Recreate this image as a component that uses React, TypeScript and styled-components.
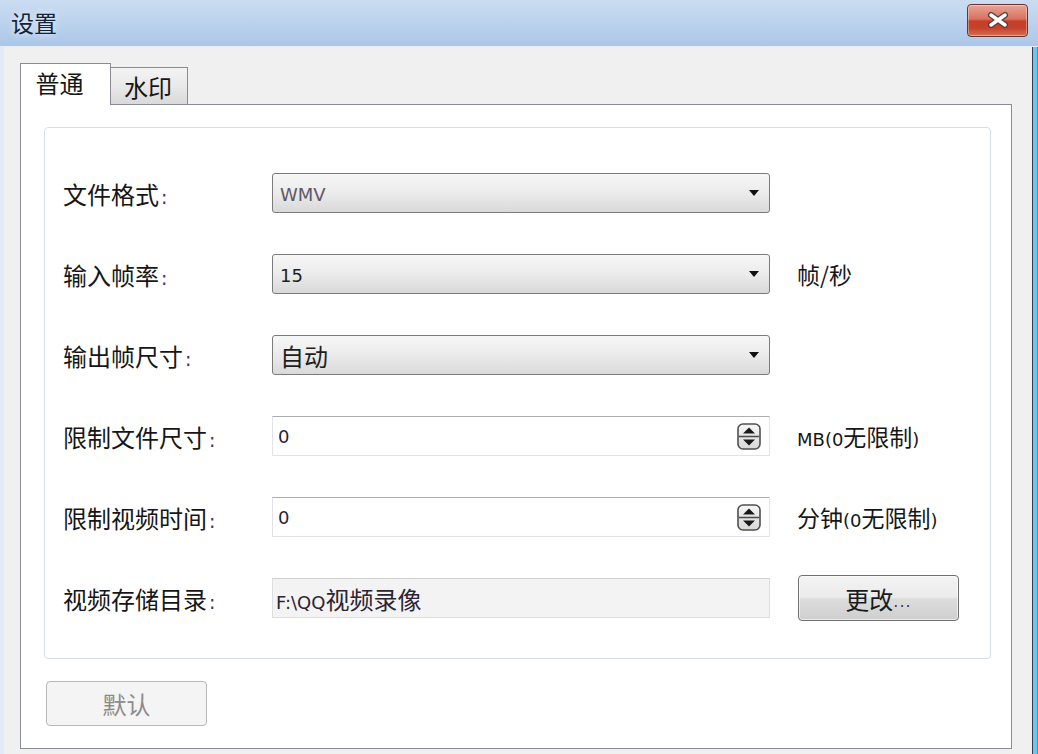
import React from "react";
import styled, { createGlobalStyle } from "styled-components";

const GlobalStyle = createGlobalStyle`
  html, body { margin: 0; padding: 0; background: #f0f0f0; }
  body {
    font-family: "DejaVu Sans", "Noto Sans CJK SC", sans-serif;
    font-size: 24px;
    color: #161616;
  }
  * { box-sizing: border-box; }
`;

const Window = styled.div`
  width: 1038px;
  height: 754px;
  display: flex;
  flex-direction: column;
  overflow: hidden;
  background: #f0f0f0;
`;

const TitleBar = styled.div`
  height: 47px;
  flex: none;
  display: flex;
  align-items: center;
  justify-content: space-between;
  padding: 0 10px 0 11px;
  background: linear-gradient(#cadcf1, #bad1ec 55%, #abc7e7);
  border-bottom: 1px solid #e6edf6;
`;

const Title = styled.div`
  font-family: "Noto Sans CJK SC", sans-serif;
  font-size: 23px;
  color: #13233a;
  text-shadow: 0 0 6px rgba(255, 255, 255, 0.9);
  margin-top: -2px;
`;

const CloseButton = styled.div`
  width: 61px;
  height: 33px;
  margin-top: -6px;
  border: 1px solid #6b3434;
  border-radius: 4px;
  display: flex;
  align-items: center;
  justify-content: center;
  background: linear-gradient(#e8a496, #d9725f 45%, #c63e29 52%, #c5432c 75%, #d8704f);
  box-shadow: inset 0 0 0 1px rgba(255, 255, 255, 0.35);
`;

const Body = styled.div`
  flex: 1;
  display: flex;
  min-height: 0;
  border-left: 4px solid #e3eaf6;
`;

const Content = styled.div`
  flex: 1;
  display: flex;
  flex-direction: column;
  padding: 16px 18px 5px 16px;
`;

const RightFrame = styled.div`
  width: 8px;
  flex: none;
  background: linear-gradient(to right, #f0f0f0 0 2px, #2d3f56 2px 3px, #6ac6ec 3px 7px, #3d95c8 7px);
`;

const TabStrip = styled.div`
  display: flex;
  align-items: flex-end;
  height: 42px;
  margin-bottom: -1px;
  position: relative;
  z-index: 1;
`;

const Tab = styled.div<{ $active?: boolean }>`
  font-family: "Noto Sans CJK SC", sans-serif;
  font-size: 24px;
  display: flex;
  align-items: center;
  justify-content: center;
  border: 1px solid #898c95;
  border-bottom: none;
  width: ${(p) => (p.$active ? 91 : 78)}px;
  height: ${(p) => (p.$active ? 42 : 37)}px;
  margin-bottom: ${(p) => (p.$active ? 0 : 1)}px;
  margin-left: ${(p) => (p.$active ? 0 : -1)}px;
  padding: ${(p) => (p.$active ? "0 12px 4px 0" : "0 2px 0 0")};
  background: ${(p) => (p.$active ? "#ffffff" : "linear-gradient(#f3f3f3, #e9e9e9 50%, #d9d9d9)")};
  position: relative;
  z-index: ${(p) => (p.$active ? 2 : 1)};
`;

const Panel = styled.div`
  flex: 1;
  background: #ffffff;
  border: 1px solid #898c95;
  padding: 22px 20px 0 23px;
  display: flex;
  flex-direction: column;
`;

const Group = styled.div`
  border: 1px solid #d5dfe5;
  border-radius: 4px;
  padding: 45px 20px 40px 18px;
  display: grid;
  grid-template-columns: 182px 498px 1fr;
  column-gap: 27px;
  row-gap: 41px;
  grid-auto-rows: 40px;
  align-items: center;
`;

const Label = styled.div`
  font-family: "Noto Sans CJK SC", sans-serif;
  white-space: nowrap;
`;

const Colon = styled.span`
  font-family: "DejaVu Sans", sans-serif;
  font-size: 19px;
  color: #4a2d5a;
  margin-left: 2px;
`;

const Latin = styled.span`
  font-family: "DejaVu Sans", sans-serif;
  font-size: 18px;
`;

const Select = styled.div`
  height: 40px;
  display: flex;
  align-items: center;
  justify-content: space-between;
  padding: 0 10px 0 7px;
  border: 1px solid #7b7b7b;
  border-radius: 3px;
  background: linear-gradient(#f7f7f7, #ebebeb 50%, #d9d9d9);
  color: #2a2a2a;
`;

const SelectValue = styled.span<{ $muted?: boolean }>`
  color: ${(p) => (p.$muted ? "#5d5868" : "#1e1e1e")};
`;

const Arrow = styled.span`
  width: 0;
  height: 0;
  border-left: 5px solid transparent;
  border-right: 5px solid transparent;
  border-top: 6px solid #111;
`;

const TextInput = styled.div<{ $readonly?: boolean }>`
  height: 40px;
  display: flex;
  align-items: center;
  justify-content: space-between;
  padding: 0 8px 0 ${(p) => (p.$readonly ? 3 : 5)}px;
  border: 1px solid ${(p) => (p.$readonly ? "#dedede" : "#e2e3ea")};
  border-top-color: ${(p) => (p.$readonly ? "#cfcfcf" : "#abadb3")};
  background: ${(p) => (p.$readonly ? "#f3f3f3" : "#ffffff")};
  color: #2a2434;
`;

const Unit = styled.div`
  font-family: "Noto Sans CJK SC", sans-serif;
  white-space: nowrap;
  font-size: 23px;
`;

const Button = styled.div<{ $disabled?: boolean }>`
  font-family: "Noto Sans CJK SC", sans-serif;
  width: 161px;
  height: 46px;
  display: flex;
  align-items: center;
  justify-content: center;
  border-radius: 4px;
  border: 1px solid ${(p) => (p.$disabled ? "#b5b9bc" : "#707070")};
  background: ${(p) =>
    p.$disabled
      ? "#f4f4f4"
      : "linear-gradient(#f3f3f3, #ebebeb 48%, #dddddd 52%, #cfcfcf)"};
  color: ${(p) => (p.$disabled ? "#8b8b8b" : "#1a1a1a")};
  box-shadow: ${(p) => (p.$disabled ? "none" : "inset 0 0 0 1px rgba(255,255,255,0.6)")};
`;

const ChangeButton = styled(Button)`
  margin: -3px 0 -3px 1px;
`;

const DefaultButton = styled(Button)`
  margin: 22px 0 0 2px;
  height: 45px;
`;

const Dots = styled.span`
  font-family: "DejaVu Sans", sans-serif;
  font-size: 16px;
  color: #4b2f6a;
  letter-spacing: 1px;
  margin-top: 6px;
`;

const CloseIcon = () => (
  <svg width="22" height="16" viewBox="0 0 22 16">
    <path d="M4 3 L18 13 M18 3 L4 13" stroke="#5a3a3a" strokeWidth="6" strokeLinecap="round" />
    <path d="M4 3 L18 13 M18 3 L4 13" stroke="#ffffff" strokeWidth="3.5" strokeLinecap="round" />
  </svg>
);

const SpinIcon = () => (
  <svg width="24" height="27" viewBox="0 0 24 27">
    <defs>
      <linearGradient id="spg" x1="0" y1="0" x2="0" y2="1">
        <stop offset="0" stopColor="#f6f6f6" />
        <stop offset="1" stopColor="#d8d8d8" />
      </linearGradient>
    </defs>
    <rect x="1" y="1" width="22" height="25" rx="5" fill="url(#spg)" stroke="#4f4f4f" strokeWidth="1.6" />
    <line x1="2" y1="13.5" x2="22" y2="13.5" stroke="#4f4f4f" strokeWidth="1.6" />
    <path d="M6 10.5 L18 10.5 L12 4.5 Z" fill="#1a1a1a" />
    <path d="M6 16.5 L18 16.5 L12 22.5 Z" fill="#1a1a1a" />
  </svg>
);

export default function App() {
  return (
    <>
      <GlobalStyle />
      <Window>
        <TitleBar>
          <Title>设置</Title>
          <CloseButton>
            <CloseIcon />
          </CloseButton>
        </TitleBar>
        <Body>
          <Content>
            <TabStrip>
              <Tab $active>普通</Tab>
              <Tab>水印</Tab>
            </TabStrip>
            <Panel>
              <Group>
                <Label>
                  文件格式<Colon>:</Colon>
                </Label>
                <Select>
                  <SelectValue $muted>
                    <Latin>WMV</Latin>
                  </SelectValue>
                  <Arrow />
                </Select>
                <span />

                <Label>
                  输入帧率<Colon>:</Colon>
                </Label>
                <Select>
                  <SelectValue>
                    <Latin>15</Latin>
                  </SelectValue>
                  <Arrow />
                </Select>
                <Unit>帧/秒</Unit>

                <Label>
                  输出帧尺寸<Colon>:</Colon>
                </Label>
                <Select>
                  <SelectValue>自动</SelectValue>
                  <Arrow />
                </Select>
                <span />

                <Label>
                  限制文件尺寸<Colon>:</Colon>
                </Label>
                <TextInput>
                  <Latin>0</Latin>
                  <SpinIcon />
                </TextInput>
                <Unit>
                  <Latin>MB(0</Latin>无限制<Latin>)</Latin>
                </Unit>

                <Label>
                  限制视频时间<Colon>:</Colon>
                </Label>
                <TextInput>
                  <Latin>0</Latin>
                  <SpinIcon />
                </TextInput>
                <Unit>
                  分钟<Latin>(0</Latin>无限制<Latin>)</Latin>
                </Unit>

                <Label>
                  视频存储目录<Colon>:</Colon>
                </Label>
                <TextInput $readonly>
                  <span>
                    <Latin>F:\QQ</Latin>视频录像
                  </span>
                </TextInput>
                <ChangeButton>
                  更改<Dots>...</Dots>
                </ChangeButton>
              </Group>
              <DefaultButton $disabled>默认</DefaultButton>
            </Panel>
          </Content>
          <RightFrame />
        </Body>
      </Window>
    </>
  );
}
